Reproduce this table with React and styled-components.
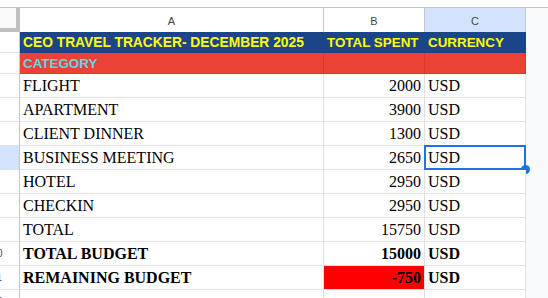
import React from 'react';
import styled, { createGlobalStyle } from 'styled-components';

const GlobalStyle = createGlobalStyle`
  html, body {
    margin: 0;
    padding: 0;
    background: #ffffff;
    overflow: hidden;
  }
`;

const cols = '20px 304px 101px 101px 1fr';
const gridLine = '#e1e1e1';

const Page = styled.div`
  width: 548px;
  height: 298px;
  overflow: hidden;
  background: #ffffff;
`;

const TopStrip = styled.div`
  height: 7px;
  border-bottom: 1px solid #c4c7c5;
`;

const Row = styled.div`
  display: grid;
  grid-template-columns: ${cols};
  height: ${props => props.h}px;
`;

const Corner = styled.div`
  background: #f8f9fa;
  border-right: 4px solid #c0c0c0;
  border-bottom: 4px solid #c0c0c0;
  box-sizing: border-box;
  height: 24px;
`;

const ColHead = styled.div`
  display: flex;
  align-items: center;
  justify-content: center;
  box-sizing: border-box;
  border-right: 1px solid #c4c7c5;
  background: ${props => (props.active ? '#d3e3fd' : '#ffffff')};
  font-family: 'Liberation Sans', Arial, sans-serif;
  font-size: 11px;
  color: #444746;
  padding-top: 1px;
`;

// only the right edge of the row-number column is in view
const RowHead = styled.div`
  display: flex;
  align-items: center;
  box-sizing: border-box;
  overflow: hidden;
  border-right: 1px solid #c4c7c5;
  border-bottom: 1px solid ${gridLine};
  background: ${props => (props.active ? '#d3e3fd' : '#ffffff')};
  font-family: 'Liberation Sans', Arial, sans-serif;
  font-size: 10px;
  color: #444746;

  span {
    flex: none;
    width: 46px;
    margin-left: -26px;
    text-align: center;
  }
`;

const Cell = styled.div`
  position: relative;
  display: flex;
  align-items: center;
  justify-content: ${props => (props.right ? 'flex-end' : 'flex-start')};
  box-sizing: border-box;
  padding: 0 3px;
  padding-top: 1px;
  white-space: nowrap;
  border-right: 1px solid ${props => props.line || gridLine};
  border-bottom: 1px solid ${props => props.line || gridLine};
  background: ${props => props.bg || '#ffffff'};
  color: ${props => props.color || '#000000'};
  font-family: ${props => (props.sans
    ? "'Liberation Sans', Arial, sans-serif"
    : "'Liberation Serif', 'Times New Roman', serif")};
  font-size: ${props => props.size || (props.sans ? '13.4px' : '16px')};
  font-weight: ${props => (props.bold ? 700 : 400)};
`;

const Filler = styled.div`
  background: #f8f9fa;
`;

const Selection = styled.div`
  position: absolute;
  left: -1px;
  top: -1px;
  right: -1px;
  bottom: -1px;
  border: 2px solid #1a73e8;
  pointer-events: none;
`;

const Handle = styled.div`
  position: absolute;
  right: -6px;
  bottom: -6px;
  width: 9px;
  height: 9px;
  border-radius: 50%;
  background: #1a73e8;
`;

const items = [
  { n: 3, label: 'FLIGHT', amount: '2000' },
  { n: 4, label: 'APARTMENT', amount: '3900' },
  { n: 5, label: 'CLIENT DINNER', amount: '1300' },
  { n: 6, label: 'BUSINESS MEETING', amount: '2650', selected: true },
  { n: 7, label: 'HOTEL', amount: '2950' },
  { n: 8, label: 'CHECKIN', amount: '2950' },
  { n: 9, label: 'TOTAL', amount: '15750' },
  { n: 10, label: 'TOTAL BUDGET', amount: '15000', bold: true },
  { n: 11, label: 'REMAINING BUDGET', amount: '-750', bold: true, alert: true },
];

export default function App() {
  return (
    <Page>
      <GlobalStyle />
      <TopStrip />
      <Row h={24}>
        <Corner />
        <ColHead>A</ColHead>
        <ColHead>B</ColHead>
        <ColHead active>C</ColHead>
        <Filler />
      </Row>
      <Row h={21}>
        <RowHead><span>1</span></RowHead>
        <Cell sans bold size="13.8px" bg="#1c4587" color="#ffff00" line="#1c4587">CEO TRAVEL TRACKER- DECEMBER 2025</Cell>
        <Cell sans bold bg="#1c4587" color="#ffff00" line="#1c4587">TOTAL SPENT</Cell>
        <Cell sans bold bg="#1c4587" color="#ffff00" line="#1c4587">CURRENCY</Cell>
        <Filler />
      </Row>
      <Row h={21}>
        <RowHead><span>2</span></RowHead>
        <Cell sans bold bg="#ea4335" color="#5ad8ec" line="#d8392c">CATEGORY</Cell>
        <Cell sans bold bg="#ea4335" line="#d8392c" />
        <Cell sans bold bg="#ea4335" line="#d8392c" />
        <Filler />
      </Row>
      {items.map(item => (
        <Row h={24} key={item.n}>
          <RowHead active={item.selected}><span>{item.n}</span></RowHead>
          <Cell bold={item.bold}>{item.label}</Cell>
          <Cell right bold={item.bold} bg={item.alert ? '#ff0000' : undefined}>{item.amount}</Cell>
          <Cell bold={item.bold}>
            USD
            {item.selected ? <Selection><Handle /></Selection> : null}
          </Cell>
          <Filler />
        </Row>
      ))}
      <Row h={24}>
        <RowHead><span>12</span></RowHead>
        <Cell />
        <Cell />
        <Cell />
        <Filler />
      </Row>
    </Page>
  );
}
